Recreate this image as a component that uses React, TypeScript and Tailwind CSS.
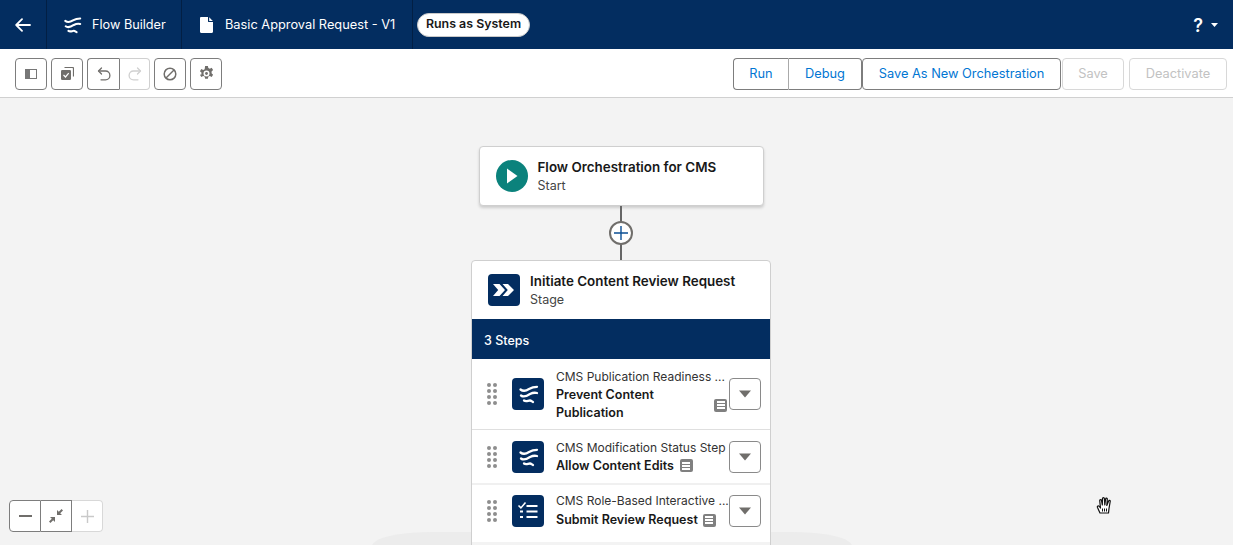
import React from "react";

function Waves({ size = 32, box = "0 0 32 32" }: { size?: number; box?: string }) {
  return (
    <svg width={size} height={size} viewBox={box} fill="none" stroke="#fff" strokeWidth="2.300" strokeLinecap="round">
      <path d="M8.500 11.500 C11 13.500 14 13 17 11 C19 9.800 22 8.800 25 8.800" />
      <path d="M9 17.500 C11.500 19.500 15 18 18 16 C20 15 23 14.500 25 15" />
      <path d="M12 22.500 C14 24 16 22.500 18 22.500 C19 22.500 20 23.500 21 24" />
    </svg>
  );
}

function Doc() {
  return (
    <svg width="13" height="16" viewBox="0 0 13 16" fill="#fff">
      <path d="M1.200 0H8v4.200c0 .5.400.9.900.9H13v9.700c0 .7-.5 1.200-1.200 1.200H1.200C.5 16 0 15.500 0 14.800V1.200C0 .5.500 0 1.200 0Z" />
      <path d="M9.200 0.200 12.800 4H9.200Z" />
    </svg>
  );
}

function NoteIcon() {
  return (
    <span className="flex h-[13px] w-[13px] shrink-0 flex-col justify-center gap-[1px] rounded-[2px] bg-[#808080] px-[2.500px]">
      <span className="h-[2px] bg-white" />
      <span className="h-[2px] bg-white" />
      <span className="h-[2px] bg-white" />
    </span>
  );
}

function Grip() {
  return (
    <div className="grid w-[10px] shrink-0 grid-cols-2 gap-x-[2px] gap-y-[2px]">
      {[0, 1, 2, 3, 4, 5, 6, 7].map((i) => (
        <span key={i} className="h-[4px] w-[4px] rounded-full bg-[#8e8e8e]" />
      ))}
    </div>
  );
}

function Caret() {
  return (
    <button className="flex h-[32px] w-[32px] shrink-0 items-center justify-center rounded-[4px] border border-[#8a8a8a] bg-white">
      <svg width="14" height="8" viewBox="0 0 14 8"><path d="M1 0.500h12L7 7.500Z" fill="#706e6b" /></svg>
    </button>
  );
}

function ToolBtn({ children, cls = "" }: { children: React.ReactNode; cls?: string }) {
  return <button className={`flex h-[32px] w-[32px] items-center justify-center border border-[#7d7d7d] bg-white ${cls}`}>{children}</button>;
}

function IconTile({ children }: { children: React.ReactNode }) {
  return <div className="flex h-[32px] w-[32px] shrink-0 items-center justify-center rounded-[4px] bg-[#032d60]">{children}</div>;
}

export default function App() {
  return (
    <div className="flex h-[545px] w-[1233px] flex-col overflow-hidden bg-[#f3f3f3] text-[13px] text-[#181818]" style={{ fontFamily: "Inter, 'Noto Sans', sans-serif" }}>
      {/* header */}
      <header className="flex h-[49px] shrink-0 items-center bg-[#032d60] text-white">
        <div className="flex h-full w-[47px] items-center justify-center border-r border-[#021f44]">
          <svg width="16" height="14" viewBox="0 0 16 14" fill="none" stroke="#fff" strokeWidth="1.800" strokeLinecap="round" strokeLinejoin="round">
            <path d="M15 7H1.500M7 1.200 1.200 7 7 12.800" />
          </svg>
        </div>
        <div className="flex h-full w-[135px] items-center gap-[10px] border-r border-[#021f44] pl-[16px]">
          <Waves size={19} box="6 5 21 21" />
          <span className="pt-[1px] text-[12.700px]">Flow Builder</span>
        </div>
        <div className="flex h-full w-[231px] items-center gap-[12px] border-r border-[#021f44] pl-[18px]">
          <Doc />
          <span className="pt-[1px] text-[12.800px]">Basic Approval Request - V1</span>
        </div>
        <span className="ml-[4px] flex h-[24px] w-[113px] items-center justify-center rounded-full border border-[#c9c9c9] bg-white text-[12.400px] font-semibold text-[#181818]">Runs as System</span>
        <div className="ml-auto flex items-center gap-[8px] pr-[15px]">
          <span className="pt-[2px] text-[18px] font-semibold leading-none">?</span>
          <svg width="7" height="4" viewBox="0 0 7 4"><path d="M0 0h7L3.500 4Z" fill="#fff" /></svg>
        </div>
      </header>

      {/* toolbar */}
      <div className="flex h-[49px] shrink-0 items-center border-b border-[#d0d0d0] bg-white pl-[15px] pr-[6px] pt-[1px]">
        <ToolBtn cls="rounded-[4px]">
          <svg width="12" height="10" viewBox="0 0 12 10"><rect x="0.500" y="0.500" width="11" height="9" fill="none" stroke="#777" /><rect x="0.500" y="0.500" width="4.500" height="9" fill="#777" /></svg>
        </ToolBtn>
        <ToolBtn cls="ml-[4px] rounded-[4px]">
          <svg width="13" height="13" viewBox="0 0 13 13">
            <path d="M3.500 0.500h8a1 1 0 0 1 1 1v8" fill="none" stroke="#706e6b" strokeWidth="1.200" />
            <rect x="0" y="3" width="10" height="10" rx="1.200" fill="#706e6b" />
            <path d="M2.500 8l2 2 3.200-3.800" fill="none" stroke="#fff" strokeWidth="1.200" />
          </svg>
        </ToolBtn>
        <ToolBtn cls="ml-[4px] rounded-l-[4px] border-r-0">
          <svg width="14" height="14" viewBox="0 0 14 14" fill="none" stroke="#706e6b" strokeWidth="1.300" strokeLinecap="round" strokeLinejoin="round">
            <path d="M4.500 1 1.500 4 4.500 7" /><path d="M2 4h6.500a4.300 4.300 0 0 1 0 8.800H4" />
          </svg>
        </ToolBtn>
        <button className="flex h-[32px] w-[31px] items-center justify-center rounded-r-[4px] border border-l-[#7d7d7d] border-y-[#d0d0d0] border-r-[#d0d0d0] bg-white">
          <svg width="14" height="14" viewBox="0 0 14 14" fill="none" stroke="#d0d0d0" strokeWidth="1.300" strokeLinecap="round" strokeLinejoin="round">
            <path d="M9.500 1 12.500 4 9.500 7" /><path d="M12 4H5.500a4.300 4.300 0 0 0 0 8.800H10" />
          </svg>
        </button>
        <ToolBtn cls="ml-[4px] rounded-[4px]">
          <svg width="14" height="14" viewBox="0 0 14 14" fill="none" stroke="#706e6b" strokeWidth="1.500">
            <circle cx="7" cy="7" r="5.800" /><path d="M3 11 11 3" />
          </svg>
        </ToolBtn>
        <ToolBtn cls="ml-[4px] rounded-[4px]">
          <svg width="15" height="15" viewBox="0 0 13 13">
            <path fill="#706e6b" fillRule="evenodd" d="M5.300 0h2.400l.4 1.800 1.300.6 1.600-.9 1.200 2-1.300 1.200v1.600l1.300 1.200-1.200 2-1.600-.9-1.300.6-.4 1.800H5.300l-.4-1.800-1.300-.6-1.600.9-1.200-2L2.100 7.300V5.700L.8 4.500l1.200-2 1.600.9 1.300-.6ZM6.500 3.900a2.600 2.600 0 1 0 0 5.200 2.600 2.600 0 0 0 0-5.200Z" />
            <circle cx="6.500" cy="6.500" r="1.200" fill="#706e6b" />
          </svg>
        </ToolBtn>

        <div className="ml-auto flex h-[32px] items-center text-[12.800px] text-[#0176d3]">
          <button className="h-full w-[56px] rounded-l-[4px] border border-[#7d7d7d] border-r-[#aaaaaa] bg-white">Run</button>
          <button className="h-full w-[73px] rounded-r-[4px] border border-l-0 border-[#7d7d7d] bg-white">Debug</button>
          <button className="h-full w-[199px] rounded-[4px] border border-[#7d7d7d] bg-white">Save As New Orchestration</button>
          <button className="ml-[1px] h-full w-[62px] rounded-[4px] border border-[#d8d8d8] bg-white text-[#c2c2c2]">Save</button>
          <button className="ml-[5px] h-full w-[98px] rounded-[4px] border border-[#d8d8d8] bg-white text-[#c2c2c2]">Deactivate</button>
        </div>
      </div>

      {/* canvas */}
      <main className="relative flex min-h-0 flex-1 flex-col items-center overflow-hidden pl-[9px] pt-[48px]">
        <div className="absolute left-[372px] top-[434px] h-[40px] w-[480px] rounded-t-[60px_14px] bg-[#ececec]" />

        <section className="relative flex h-[60px] w-[285px] shrink-0 items-center rounded-[4px] border border-[#cfcfcf] bg-white pl-[16px] shadow-[0_2px_3px_rgba(0,0,0,0.16)]">
          <span className="flex h-[32px] w-[32px] items-center justify-center rounded-full bg-[#0b827c]">
            <svg width="12" height="16" viewBox="0 0 12 16"><path d="M1 0.500v15L11.500 8Z" fill="#fff" /></svg>
          </span>
          <div className="ml-[10px]">
            <div className="text-[13.400px] font-semibold leading-[18px]">Flow Orchestration for CMS</div>
            <div className="pt-[1px] text-[12.500px] leading-[18px] text-[#444]">Start</div>
          </div>
        </section>

        <div className="relative flex h-[54px] w-[2px] shrink-0 items-center justify-center bg-[#666]">
          <span className="absolute flex h-[24px] w-[24px] items-center justify-center rounded-full border-2 border-[#706e6b] bg-white">
            <svg width="14" height="14" viewBox="0 0 14 14" stroke="#0b4f94" strokeWidth="1.400"><path d="M7 0v14M0 7h14" /></svg>
          </span>
        </div>

        <section className="relative w-[300px] shrink-0 rounded-t-[4px] border border-[#cfcfcf] bg-white">
          <div className="flex h-[58px] items-center pl-[16px]">
            <IconTile>
              <svg width="22" height="14" viewBox="0 0 22 14" fill="#fff"><path d="M0 1h6.500L12 7l-5.500 6H0l5.200-6ZM9.500 1H15l6 6-6 6H9.500L14.800 7Z" /></svg>
            </IconTile>
            <div className="ml-[10px]">
              <div className="text-[13.400px] font-semibold leading-[18px]">Initiate Content Review Request</div>
              <div className="pt-[1px] text-[12.500px] leading-[18px] text-[#444]">Stage</div>
            </div>
          </div>
          <div className="flex h-[40px] items-center bg-[#032d60] pl-[12px] pt-[4px] text-[12.500px] font-medium text-white">3 Steps</div>

          <div className="flex h-[71px] items-center border-b border-[#dfdfdf] pl-[15px] pr-[9px]">
            <Grip />
            <div className="ml-[15px]"><IconTile><Waves /></IconTile></div>
            <div className="ml-[12px] w-[173px] shrink-0 pt-[1px] leading-[18px]">
              <div className="whitespace-nowrap text-[12px] text-[#333]">CMS Publication Readiness ...</div>
              <div className="flex items-start">
                <div className="w-[140px] text-[12.500px] font-semibold">Prevent Content Publication</div>
                <div className="ml-auto mr-[2px] mt-[13px]"><NoteIcon /></div>
              </div>
            </div>
            <Caret />
          </div>

          <div className="flex h-[53px] items-center pl-[15px] pr-[9px]">
            <Grip />
            <div className="ml-[15px]"><IconTile><Waves /></IconTile></div>
            <div className="ml-[12px] w-[173px] shrink-0 leading-[18px]">
              <div className="whitespace-nowrap text-[12px] text-[#333]">CMS Modification Status Step</div>
              <div className="flex items-center gap-[6px] text-[12.500px] font-semibold">Allow Content Edits <NoteIcon /></div>
            </div>
            <Caret />
          </div>

          <div className="flex h-[59px] items-start border-t-2 border-[#f0f0f0] pl-[15px] pr-[9px] pt-[10px]">
            <div className="mt-[5px]"><Grip /></div>
            <div className="ml-[15px]">
              <IconTile>
                <svg width="32" height="32" viewBox="0 0 32 32" fill="none" stroke="#fff" strokeWidth="2.200">
                  <path d="M6.500 10.500l2.400 2.400L13.500 7.500" strokeWidth="1.600" />
                  <path d="M14.500 11h11M14.500 16.500h11M14.500 22h11" />
                  <path d="M8 16.500h3M8 22h3" />
                </svg>
              </IconTile>
            </div>
            <div className="-mt-[3px] ml-[12px] w-[173px] shrink-0 leading-[18px]">
              <div className="whitespace-nowrap text-[12px] text-[#333]">CMS Role-Based Interactive ...</div>
              <div className="mt-[1px] flex items-center gap-[5px] whitespace-nowrap text-[12.500px] font-semibold">Submit Review Request <NoteIcon /></div>
            </div>
            <Caret />
          </div>
          <div className="h-[20px] bg-[#f3f3f3]" />
        </section>

        {/* zoom */}
        <div className="absolute left-[9px] top-[402px] flex h-[32px] rounded-[4px] bg-white">
          <button className="flex h-full w-[32px] items-center justify-center rounded-l-[4px] border border-[#7d7d7d]">
            <span className="h-[1.500px] w-[13px] bg-[#706e6b]" />
          </button>
          <button className="flex h-full w-[31px] items-center justify-center border-y border-r border-[#7d7d7d]">
            <svg width="14" height="14" viewBox="0 0 14 14" fill="#706e6b">
              <path d="M8 1v5h5l-1.800-1.800L14 1.400 12.600 0 9.800 2.800Z" />
              <path d="M6 13V8H1l1.800 1.800L0 12.600 1.400 14l2.800-2.800Z" />
            </svg>
          </button>
          <button className="flex h-full w-[31px] items-center justify-center rounded-r-[4px] border-y border-r border-[#d8d8d8]">
            <svg width="13" height="13" viewBox="0 0 13 13" stroke="#c9c9c9" strokeWidth="1.400"><path d="M6.500 0v13M0 6.500h13" /></svg>
          </button>
        </div>

        {/* hand cursor */}
        <svg className="absolute left-[1096px] top-[398px]" width="18" height="19" viewBox="0 0 18 19">
          <path d="M4 17 1.500 11.500c-.6-1.500 1-2 1.800-1L4.500 12 3.700 4.500c0-1.200 1.600-1.300 1.800 0L6.300 9 6.500 2.500c0-1.300 1.800-1.300 1.900 0L8.800 9l.8-6c.2-1.200 1.800-1 1.700.2L10.800 9.500l1.800-4.500c.4-1.100 1.900-.6 1.600.5L13 12.500 12.500 17Z" fill="#fff" stroke="#111" strokeWidth="1.200" strokeLinejoin="round" />
          <path d="M6.500 12.500v3M8.500 12.500v3M10.500 12.500v3" stroke="#111" strokeWidth="1" />
        </svg>
      </main>
    </div>
  );
}
